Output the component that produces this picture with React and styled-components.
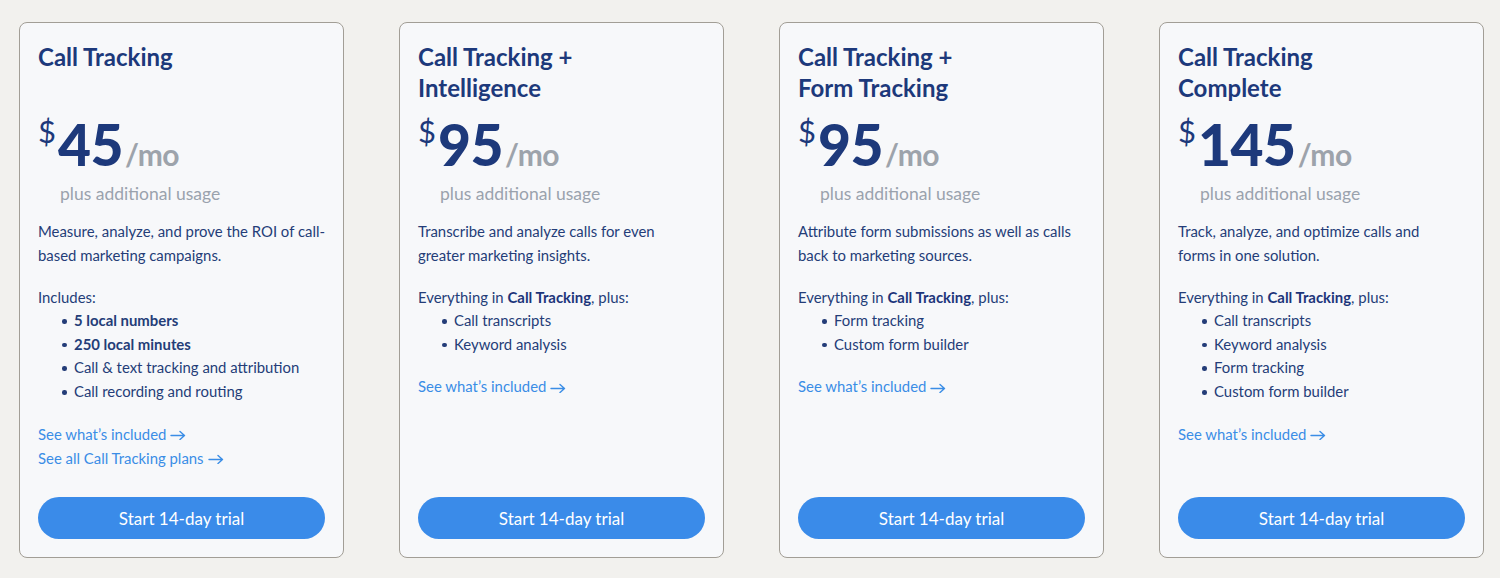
import React from "react";
import styled, { createGlobalStyle } from "styled-components";

const Global = createGlobalStyle`
  html, body { margin: 0; padding: 0; background: #f2f1ee; }
  body { font-family: "Lato", "Liberation Sans", sans-serif; }
  * { box-sizing: border-box; }
`;

const Page = styled.div`
  display: grid;
  grid-template-columns: repeat(4, 325px);
  column-gap: 55px;
  padding: 22px 19px 20px;
  width: 1500px;
  height: 578px;
  background: #f2f1ee;
`;

const Card = styled.section`
  display: flex;
  flex-direction: column;
  height: 536px;
  padding: 18px 18px 18px;
  background: #f7f8fa;
  border: 1px solid #a29e96;
  border-radius: 8px;
`;

const Title = styled.h2`
  margin: 0;
  min-height: 62px;
  font-family: "Lato", sans-serif;
  font-weight: 700;
  font-size: 24px;
  line-height: 31px;
  color: #1d397b;
`;

const PriceRow = styled.div`
  display: flex;
  align-items: baseline;
  margin-top: 19px;
  height: 48px;
  font-family: "Lato", sans-serif;
  color: #1d397b;
`;

const Dollar = styled.span`
  font-size: 31px;
  font-weight: 400;
  line-height: 31px;
  align-self: flex-start;
  margin-top: -6px;
  margin-right: 2px;
`;

const Amount = styled.span`
  font-size: 57px;
  font-weight: 900;
  line-height: 44px;
  letter-spacing: -0.5px;
`;

const Per = styled.span`
  font-size: 30px;
  font-weight: 700;
  color: #9da3ab;
  letter-spacing: -0.5px;
  margin-left: 2px;
`;

const Usage = styled.div`
  margin: 12px 0 0 22px;
  font-size: 17.5px;
  line-height: 24px;
  color: #9aa2ad;
`;

const Text = styled.p`
  margin: ${(p) => p.$top || 0}px 0 0;
  font-size: 14.9px;
  line-height: 24px;
  color: #243d78;
  white-space: nowrap;

  b { font-weight: 700; color: #1d357a; }
`;

const List = styled.ul`
  margin: 0;
  padding: 0 0 0 36px;
  list-style: none;
`;

const Item = styled.li`
  position: relative;
  font-size: 14.9px;
  line-height: 23.7px;
  color: #243d78;
  font-weight: ${(p) => (p.$bold ? 700 : 400)};

  &::before {
    content: "";
    position: absolute;
    left: -12px;
    top: 10px;
    width: 4.5px;
    height: 4.5px;
    border-radius: 50%;
    background: #243d78;
  }
`;

const Links = styled.div`
  display: flex;
  flex-direction: column;
  align-items: flex-start;
  margin-top: 18px;
`;

const LinkA = styled.a`
  display: inline-flex;
  align-items: center;
  gap: 4px;
  font-size: 14.9px;
  line-height: 24px;
  color: #3a8de6;
  text-decoration: none;
  cursor: pointer;

  svg { margin-top: 3px; }
`;

const Button = styled.button`
  margin-top: auto;
  width: 100%;
  height: 42px;
  border: none;
  border-radius: 21px;
  background: #3a8be9;
  color: #ffffff;
  font-family: "Lato", sans-serif;
  font-size: 17px;
  cursor: pointer;
`;

const Arrow = () => (
  <svg width="16" height="10" viewBox="0 0 16 10" fill="none" stroke="#3a8de6" strokeWidth="1.4" strokeLinecap="round" strokeLinejoin="round">
    <path d="M1 5.5h13.5M10 1.5l4.5 4-4.5 4" />
  </svg>
);

const plans = [
  {
    title: ["Call Tracking"],
    price: "45",
    desc: ["Measure, analyze, and prove the ROI of call-", "based marketing campaigns."],
    intro: <>Includes:</>,
    items: [
      { t: "5 local numbers", b: true },
      { t: "250 local minutes", b: true },
      { t: "Call & text tracking and attribution" },
      { t: "Call recording and routing" },
    ],
    links: ["See what’s included", "See all Call Tracking plans"],
  },
  {
    title: ["Call Tracking +", "Intelligence"],
    price: "95",
    desc: ["Transcribe and analyze calls for even", "greater marketing insights."],
    intro: <>Everything in <b>Call Tracking</b>, plus:</>,
    items: [{ t: "Call transcripts" }, { t: "Keyword analysis" }],
    links: ["See what’s included"],
  },
  {
    title: ["Call Tracking +", "Form Tracking"],
    price: "95",
    desc: ["Attribute form submissions as well as calls", "back to marketing sources."],
    intro: <>Everything in <b>Call Tracking</b>, plus:</>,
    items: [{ t: "Form tracking" }, { t: "Custom form builder" }],
    links: ["See what’s included"],
  },
  {
    title: ["Call Tracking", "Complete"],
    price: "145",
    desc: ["Track, analyze, and optimize calls and", "forms in one solution."],
    intro: <>Everything in <b>Call Tracking</b>, plus:</>,
    items: [
      { t: "Call transcripts" },
      { t: "Keyword analysis" },
      { t: "Form tracking" },
      { t: "Custom form builder" },
    ],
    links: ["See what’s included"],
  },
];

const Lines = ({ lines }) =>
  lines.map((l, j) => (
    <React.Fragment key={j}>
      {l}
      {j < lines.length - 1 && <br />}
    </React.Fragment>
  ));

export default function App() {
  return (
    <>
      <Global />
      <Page>
        {plans.map((p, i) => (
          <Card key={i}>
            <Title>
              <Lines lines={p.title} />
            </Title>
            <PriceRow>
              <Dollar>$</Dollar>
              <Amount>{p.price}</Amount>
              <Per>/mo</Per>
            </PriceRow>
            <Usage>plus additional usage</Usage>
            <Text $top={13}>
              <Lines lines={p.desc} />
            </Text>
            <Text $top={18}>{p.intro}</Text>
            <List>
              {p.items.map((it, k) => (
                <Item key={k} $bold={it.b}>{it.t}</Item>
              ))}
            </List>
            <Links>
              {p.links.map((l, k) => (
                <LinkA key={k}>
                  {l}
                  <Arrow />
                </LinkA>
              ))}
            </Links>
            <Button>Start 14-day trial</Button>
          </Card>
        ))}
      </Page>
    </>
  );
}
